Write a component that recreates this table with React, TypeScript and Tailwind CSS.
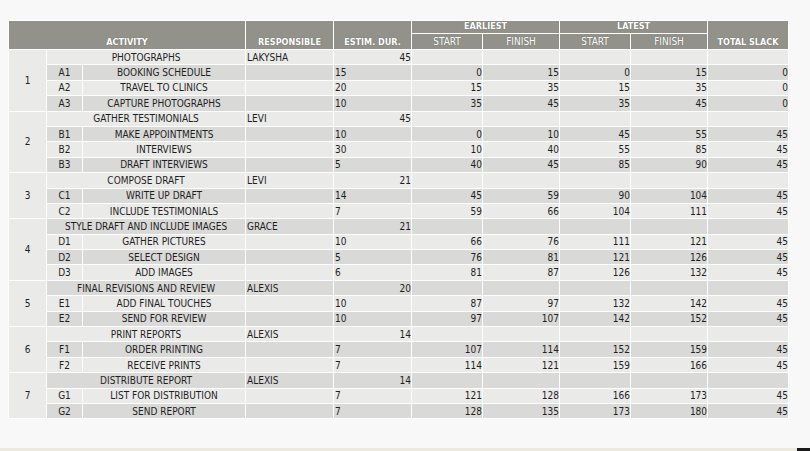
import React from "react";

type Sub = { code: string; name: string; dur: number; es: number; ef: number; ls: number; lf: number; slack: number };
type Group = { n: number; name: string; resp: string; dur: number; subs: Sub[] };

const s = (code: string, name: string, dur: number, es: number, ef: number, ls: number, lf: number, slack: number): Sub => ({ code, name, dur, es, ef, ls, lf, slack });

const groups: Group[] = [
  { n: 1, name: "PHOTOGRAPHS", resp: "LAKYSHA", dur: 45, subs: [
    s("A1", "BOOKING SCHEDULE", 15, 0, 15, 0, 15, 0),
    s("A2", "TRAVEL TO CLINICS", 20, 15, 35, 15, 35, 0),
    s("A3", "CAPTURE PHOTOGRAPHS", 10, 35, 45, 35, 45, 0),
  ] },
  { n: 2, name: "GATHER TESTIMONIALS", resp: "LEVI", dur: 45, subs: [
    s("B1", "MAKE APPOINTMENTS", 10, 0, 10, 45, 55, 45),
    s("B2", "INTERVIEWS", 30, 10, 40, 55, 85, 45),
    s("B3", "DRAFT INTERVIEWS", 5, 40, 45, 85, 90, 45),
  ] },
  { n: 3, name: "COMPOSE DRAFT", resp: "LEVI", dur: 21, subs: [
    s("C1", "WRITE UP DRAFT", 14, 45, 59, 90, 104, 45),
    s("C2", "INCLUDE TESTIMONIALS", 7, 59, 66, 104, 111, 45),
  ] },
  { n: 4, name: "STYLE DRAFT AND INCLUDE IMAGES", resp: "GRACE", dur: 21, subs: [
    s("D1", "GATHER PICTURES", 10, 66, 76, 111, 121, 45),
    s("D2", "SELECT DESIGN", 5, 76, 81, 121, 126, 45),
    s("D3", "ADD IMAGES", 6, 81, 87, 126, 132, 45),
  ] },
  { n: 5, name: "FINAL REVISIONS AND REVIEW", resp: "ALEXIS", dur: 20, subs: [
    s("E1", "ADD FINAL TOUCHES", 10, 87, 97, 132, 142, 45),
    s("E2", "SEND FOR REVIEW", 10, 97, 107, 142, 152, 45),
  ] },
  { n: 6, name: "PRINT REPORTS", resp: "ALEXIS", dur: 14, subs: [
    s("F1", "ORDER PRINTING", 7, 107, 114, 152, 159, 45),
    s("F2", "RECEIVE PRINTS", 7, 114, 121, 159, 166, 45),
  ] },
  { n: 7, name: "DISTRIBUTE REPORT", resp: "ALEXIS", dur: 14, subs: [
    s("G1", "LIST FOR DISTRIBUTION", 7, 121, 128, 166, 173, 45),
    s("G2", "SEND REPORT", 7, 128, 135, 173, 180, 45),
  ] },
];

const LIGHT = "bg-[#eaeae8]";
const DARK = "bg-[#d9d9d7]";

const td = "border border-white p-0 leading-[13px] align-middle whitespace-nowrap";
const th = "border border-white p-0 bg-[#92928b] text-white font-bold text-[9px] leading-[11px] align-bottom text-center whitespace-nowrap [text-shadow:0_0_1px_rgba(60,60,60,0.6)]";
const thSub = "border border-white p-0 bg-[#92928b] text-white font-normal text-[10px] leading-[12px] align-bottom text-center whitespace-nowrap [text-shadow:0_0_1px_rgba(60,60,60,0.6)]";

export default function App() {
  let rowIdx = 0;
  const rows: React.ReactNode[] = [];
  groups.forEach((g) => {
    const span = g.subs.length + 1;
    const bg = rowIdx % 2 === 0 ? LIGHT : DARK;
    rowIdx++;
    rows.push(
      <tr key={g.n} className="h-[15.4px]">
        <td rowSpan={span} className={`${td} ${LIGHT} text-center`}>{g.n}</td>
        <td colSpan={2} className={`${td} ${bg} text-center`}>{g.name}</td>
        <td className={`${td} ${bg} pl-px`}>{g.resp}</td>
        <td className={`${td} ${bg} text-right`}>{g.dur}</td>
        <td className={`${td} ${bg}`}></td>
        <td className={`${td} ${bg}`}></td>
        <td className={`${td} ${bg}`}></td>
        <td className={`${td} ${bg}`}></td>
        <td className={`${td} ${bg}`}></td>
      </tr>
    );
    g.subs.forEach((r) => {
      const b = rowIdx % 2 === 0 ? LIGHT : DARK;
      rowIdx++;
      rows.push(
        <tr key={r.code} className="h-[15.4px]">
          <td className={`${td} ${b} text-center`}>{r.code}</td>
          <td className={`${td} ${b} text-center`}>{r.name}</td>
          <td className={`${td} ${b}`}></td>
          <td className={`${td} ${b} pl-px`}>{r.dur}</td>
          <td className={`${td} ${b} text-right`}>{r.es}</td>
          <td className={`${td} ${b} text-right`}>{r.ef}</td>
          <td className={`${td} ${b} text-right`}>{r.ls}</td>
          <td className={`${td} ${b} text-right`}>{r.lf}</td>
          <td className={`${td} ${b} text-right`}>{r.slack}</td>
        </tr>
      );
    });
  });

  return (
    <div className="w-[810px] h-[451px] bg-[#f8f8f8] flex flex-col overflow-hidden font-['DejaVu_Sans_Condensed','Liberation_Sans',sans-serif] text-[10px] text-[#1e1e1e]">
      <div className="pt-[20px] pl-[8px] flex-1">
        <table className="table-fixed border-collapse w-[780px]">
          <colgroup>
            <col className="w-[38px]" />
            <col className="w-[36px]" />
            <col className="w-[163px]" />
            <col className="w-[88px]" />
            <col className="w-[78px]" />
            <col className="w-[71px]" />
            <col className="w-[77px]" />
            <col className="w-[71px]" />
            <col className="w-[77px]" />
            <col className="w-[81px]" />
          </colgroup>
          <thead>
            <tr className="h-[13px]">
              <th colSpan={3} rowSpan={2} className={`${th} pb-[1px]`}>ACTIVITY</th>
              <th rowSpan={2} className={`${th} pb-[1px]`}>RESPONSIBLE</th>
              <th rowSpan={2} className={`${th} pb-[1px]`}>ESTIM. DUR.</th>
              <th colSpan={2} className={`${th} pb-[1px]`}>EARLIEST</th>
              <th colSpan={2} className={`${th} pb-[1px]`}>LATEST</th>
              <th rowSpan={2} className={`${th} pb-[1px]`}>TOTAL SLACK</th>
            </tr>
            <tr className="h-[16px]">
              <th className={`${thSub} pb-[1px]`}>START</th>
              <th className={`${thSub} pb-[1px]`}>FINISH</th>
              <th className={`${thSub} pb-[1px]`}>START</th>
              <th className={`${thSub} pb-[1px]`}>FINISH</th>
            </tr>
          </thead>
          <tbody>{rows}</tbody>
        </table>
      </div>
      <div className="h-[3px] flex bg-[#ebe9e0]">
        <div className="flex-1" />
        <div className="w-[13px] bg-[#1a1a1a]" />
      </div>
    </div>
  );
}
